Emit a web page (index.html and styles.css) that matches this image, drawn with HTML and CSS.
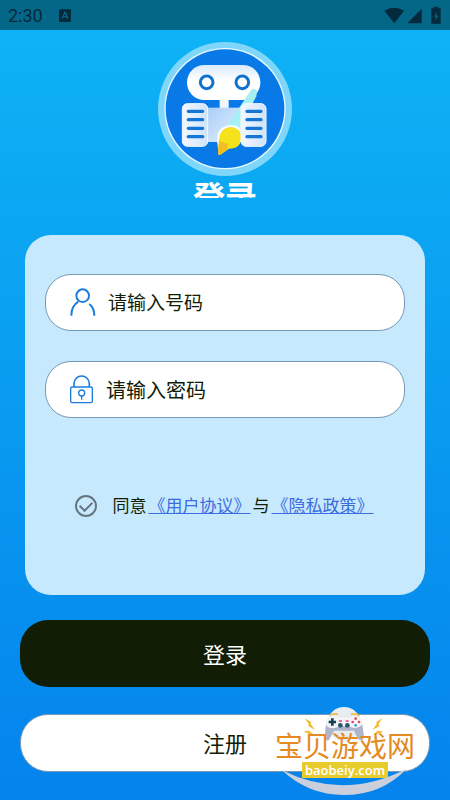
FILE: index.html
```
<!DOCTYPE html>
<html lang="zh-CN">
<head>
  <meta charset="UTF-8" />
  <meta name="viewport" content="width=device-width, initial-scale=1.0"/>
  <title>登录</title>
  <link rel="stylesheet" href="styles.css">
</head>
<body>
  <!-- 状态栏 -->
  <div class="status-bar">
    <span class="time">2:30</span>
    <svg class="keyboard-icon" viewBox="176 24 36 39" width="12" height="13" aria-hidden="true">
      <rect x="176" y="25" width="36" height="38" rx="4" fill="#03293a"/>
      <path d="M186 53 L193 34 L195 34 L202 53 M189 47 H199" fill="none" stroke="#046788" stroke-width="4"/>
    </svg>
    <svg class="signal-icons" viewBox="1155 16 174 54" width="58" height="18" aria-hidden="true">
      <path d="M1156 30 Q1185 12 1215 30 L1186 68 Z" fill="#03293a"/>
      <path d="M1268 24 V68 H1225 Z" fill="#03293a"/>
      <path d="M1304 18 H1318 V23 H1325 V69 H1297 V23 H1304 Z" fill="#03293a"/>
      <path d="M1315 32 L1305 48 H1311 L1308 61 L1318 45 H1312 Z" fill="#046788"/>
    </svg>
  </div>

  <header class="brand">
    <svg viewBox="24 21 402 402" width="134" height="134" role="img" aria-label="logo">
      <defs>
        <linearGradient id="head" x1="0" y1="0" x2="0" y2="1">
          <stop offset="0" stop-color="#d8eafd"/>
          <stop offset="0.45" stop-color="#ffffff"/>
        </linearGradient>
        <linearGradient id="torso" x1="0" y1="0" x2="1" y2="1">
          <stop offset="0" stop-color="#a9cef8"/>
          <stop offset="1" stop-color="#e4f0fe"/>
        </linearGradient>
        <linearGradient id="arm" x1="0" y1="0" x2="1" y2="0">
          <stop offset="0" stop-color="#f3f8ff"/>
          <stop offset="1" stop-color="#cfe3fb"/>
        </linearGradient>
      </defs>
      <circle cx="225" cy="222" r="201" fill="#7ed6fa"/>
      <circle cx="225" cy="221" r="182" fill="#e9faff"/>
      <circle cx="225" cy="221" r="178" fill="#0879e6"/>
      <rect x="209" y="185" width="27" height="40" fill="#f2f8ff"/>
      <rect x="111" y="90" width="220" height="105" rx="52" fill="url(#head)"/>
      <circle cx="170" cy="142" r="19" fill="#fff" stroke="#0f72ce" stroke-width="9"/>
      <circle cx="277" cy="142" r="19" fill="#fff" stroke="#0f72ce" stroke-width="9"/>
      <rect x="170" y="218" width="105" height="103" fill="url(#torso)"/>
      <path d="M303 165 Q313 156 321 168 L319 184 L264 287 L229 276 Z" fill="#a6f0f4"/>
      <rect x="97" y="206" width="76" height="128" rx="15" fill="url(#arm)" stroke="#f4f9ff" stroke-width="3"/>
      <path d="M115 229 H158 M115 254 H158 M115 280 H158 M115 305 H158" stroke="#1676d6" stroke-width="10" stroke-linecap="round"/>
      <path d="M201 318 Q198 276 240 270 Q258 268 269 278 L266 330 L205 347 Z" fill="#f7fbff"/>
      <path d="M207 315 Q210 279 240 276 Q274 278 274 308 Q272 341 237 341 L211 359 Q203 362 204 350 Z" fill="#f3e21c"/>
      <path d="M207 317 Q220 323 234 326 L231 343 L211 359 Q204 361 204 350 Z" fill="#f4bd25"/>
      <rect x="273" y="206" width="75" height="128" rx="15" fill="url(#arm)" stroke="#f4f9ff" stroke-width="3"/>
      <path d="M291 229 H333 M291 254 H333 M291 280 H333 M291 305 H333" stroke="#1676d6" stroke-width="10" stroke-linecap="round"/>
    </svg>
    <h1>登录</h1>
  </header>

  <form class="login-form">
    <section class="card">
      <label class="field">
        <svg viewBox="149 174 78 87" width="26" height="29" aria-hidden="true">
          <circle cx="187" cy="197" r="19" fill="none" stroke="#1b7ce0" stroke-width="6"/>
          <path d="M174 215 Q153 228 153 257 M207 222 Q222 234 222 257" fill="none" stroke="#1b7ce0" stroke-width="6"/>
        </svg>
        <input type="text" placeholder="请输入号码" aria-label="号码">
      </label>
      <label class="field field-password">
        <svg viewBox="150 437 72 87" width="24" height="29" aria-hidden="true">
          <path d="M162 472 V463 A23 23 0 0 1 208 463 V472" fill="none" stroke="#1b7ce0" stroke-width="5"/>
          <rect x="152" y="473" width="65" height="47" rx="4" fill="none" stroke="#1b7ce0" stroke-width="4"/>
          <circle cx="185" cy="491" r="9" fill="none" stroke="#1b7ce0" stroke-width="4"/>
          <path d="M185 500 V511" stroke="#1b7ce0" stroke-width="4"/>
        </svg>
        <input type="password" placeholder="请输入密码" aria-label="密码">
      </label>
      <div class="agreement">
        <input type="checkbox" id="agree" checked>
        <p><label for="agree">同意</label><a href="#">《用户协议》</a>与<a href="#">《隐私政策》</a></p>
      </div>
    </section>

    <button type="submit" class="btn btn-login">登录</button>
    <button type="button" class="btn btn-register">注册</button>
  </form>

  <!-- 水印 -->
  <div class="watermark">
    <svg class="watermark-art" viewBox="45 48 420 270" width="140" height="90" aria-hidden="true">
      <path d="M65 240 Q250 333 440 236 Q365 315 252 315 Q145 315 65 240 Z" fill="#cbcfdc"/>
      <circle cx="252" cy="102" r="51" fill="#e7edf1"/>
      <path d="M203 85 Q213 75 235 79 H269 Q291 73 303 86 Q311 120 312 145 Q303 157 293 145 L282 122 H222 L207 150 Q198 155 195 142 Q195 105 203 85 Z" fill="#aeb4c9"/>
      <path d="M202 84 Q215 73 235 79 H269 Q291 73 304 85 Q309 98 305 106 Q287 121 267 108 H239 Q217 122 199 107 Q197 94 202 84 Z" fill="#f2f2f7"/>
      <path d="M208 76 Q219 69 234 73 M273 73 Q288 69 299 77" fill="none" stroke="#f1ba42" stroke-width="5"/>
      <path d="M217 85 V107 M206 96 H228" stroke="#173f50" stroke-width="8"/>
      <circle cx="241" cy="106" r="7" fill="#27596b"/>
      <circle cx="262" cy="106" r="7" fill="#27596b"/>
      <path d="M237 93 H246 M257 93 H266" stroke="#e6407c" stroke-width="5"/>
      <circle cx="287" cy="86" r="4" fill="#e34b56"/>
      <circle cx="287" cy="106" r="4" fill="#2e9fd0"/>
      <circle cx="278" cy="96" r="4" fill="#e6407c"/>
      <circle cx="297" cy="96" r="4" fill="#e34b56"/>
      <path d="M137 88 L153 97 L151 102 L162 117 L146 107 L147 101 Z M134 125 L148 123 L157 132 L143 129 Z M364 87 L350 97 L351 103 L340 117 L357 108 L355 101 Z M367 125 L353 123 L344 132 L359 129 Z" fill="#f6b52c" stroke="#f6b52c" stroke-width="2"/>
    </svg>
    <span class="watermark-name">宝贝游戏网</span>
    <span class="watermark-url">baobeiy.com</span>
  </div>
</body>
</html>
```

FILE: styles.css
```
* {
  box-sizing: border-box;
  margin: 0;
  padding: 0;
}

body {
  position: relative;
  min-height: 100vh;
  font-family: Roboto, "Noto Sans CJK SC", sans-serif;
  color: #111d05;
  background: linear-gradient(#0eb4f5, #0483ec);
}

.status-bar {
  display: flex;
  align-items: center;
  height: 30px;
  padding: 0 8px;
  background: #046788;
  color: #03293a;
}

.time {
  font-size: 18px;
}

.keyboard-icon {
  margin-left: 16px;
}

.signal-icons {
  margin-left: auto;
}

.brand {
  display: flex;
  flex-direction: column;
  align-items: center;
  padding-top: 12px;
}

/* 标题只露出上半部分 */
.brand h1 {
  height: 22px;
  overflow: hidden;
  color: #fff;
  font-size: 32px;
  line-height: 44px;
}

.login-form {
  display: flex;
  flex-direction: column;
  padding: 37px 20px 28px;
}

.card {
  min-height: 360px;
  margin: 0 5px 25px;
  padding: 39px 20px;
  border-radius: 26px;
  background: #c6e9fd;
}

.field {
  display: flex;
  align-items: center;
  gap: 12px;
  height: 57px;
  margin-bottom: 30px;
  padding: 0 24px;
  border: 1px solid #7799b5;
  border-radius: 26px;
  background: #fff;
}

.field input {
  flex: 1;
  min-width: 0;
  padding-top: 2px;
  border: none;
  outline: none;
  background: none;
  font-family: inherit;
  font-size: 19px;
  color: #111d05;
}

.field-password input {
  font-size: 20px;
}

.field input::placeholder {
  color: #111d05;
  opacity: 1;
}

.agreement {
  display: flex;
  align-items: center;
  justify-content: center;
  gap: 16px;
  margin-top: 75px;
}

.agreement input {
  display: grid;
  place-items: center;
  width: 22px;
  height: 22px;
  border: 2px solid #66757d;
  border-radius: 50%;
  appearance: none;
}

.agreement input:checked::after {
  content: "";
  width: 10px;
  height: 6px;
  margin-bottom: 3px;
  border: solid #66757d;
  border-width: 0 0 2px 2px;
  transform: rotate(-45deg);
}

.agreement p {
  font-size: 17px;
  line-height: 26px;
  white-space: nowrap;
}

.agreement a {
  padding: 0 2px;
  color: #3c6de0;
  text-decoration: underline;
}

.btn {
  padding-bottom: 2px;
  border: none;
  border-radius: 28px;
  font-family: inherit;
  font-size: 22px;
  cursor: pointer;
}

.btn-login {
  height: 67px;
  margin-bottom: 27px;
  background: #111d05;
  color: #fff;
}

.btn-register {
  height: 58px;
  border: 1px solid #7799b5;
  background: #fff;
  color: #111d05;
}

.watermark {
  position: absolute;
  right: 35px;
  bottom: 4px;
  display: flex;
  flex-direction: column;
  align-items: center;
  width: 140px;
  height: 90px;
  padding-top: 28px;
  pointer-events: none;
}

.watermark-art {
  position: absolute;
  top: 0;
  left: 0;
}

.watermark-name {
  position: relative;
  color: #e58a22;
  font-size: 28px;
  line-height: 28px;
  white-space: nowrap;
}

.watermark-url {
  position: relative;
  padding: 0 3px;
  background: #e8cb2c;
  color: #fff;
  font-family: "Open Sans", sans-serif;
  font-size: 13px;
  font-weight: 600;
  line-height: 16px;
}
```
